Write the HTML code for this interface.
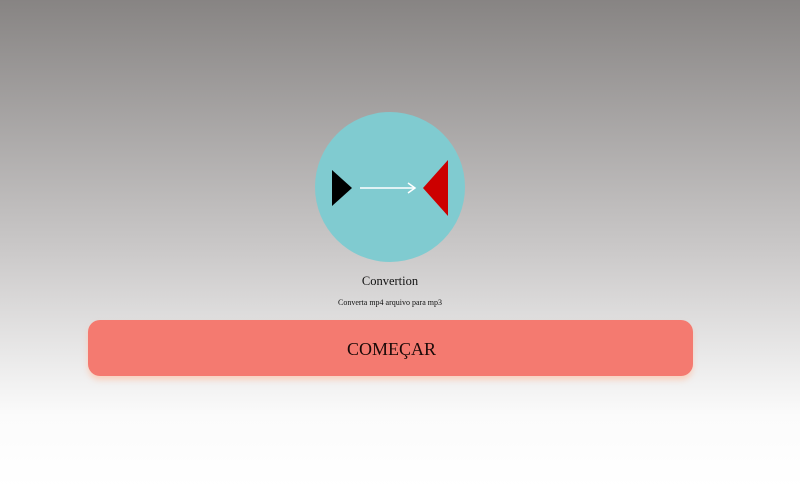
<!DOCTYPE html>
<html><head><style>
body{margin:0;width:800px;height:489px;overflow:hidden;background:linear-gradient(#878483 0%,#c9c7c7 50%,#fbfbfb 85%,#fff 100%);font-family:"Liberation Serif",serif;}
.c{position:absolute;left:315px;top:112px;width:150px;height:150px;border-radius:50%;background:#80cbd0}
.t{position:absolute;width:800px;text-align:center;left:-10px;color:#111}
.b{position:absolute;left:88px;top:320px;width:605px;height:56px;border-radius:12px;background:#f47a70;box-shadow:0 4px 6px rgba(255,190,160,.6);text-align:center;line-height:58px;font-size:18px;color:#1a0a08}
</style></head><body>
<div class="c"></div>
<svg style="position:absolute;left:0;top:0" width="800" height="489">
<polygon points="332,170 352,188 332,206" fill="#000"/>
<line x1="360" y1="188" x2="414" y2="188" stroke="#fff" stroke-width="1.5"/>
<polyline points="408,183 415,188 408,193" fill="none" stroke="#fff" stroke-width="1.5"/>
<polygon points="423,188 448,160 448,216" fill="#cc0000"/>
</svg>
<div class="t" style="top:274px;font-size:12.5px">Convertion</div>
<div class="t" style="top:298px;font-size:8px">Converta mp4 arquivo para mp3</div>
<div class="b"><span style="position:relative;left:1px">COMEÇAR</span></div>
</body></html>
